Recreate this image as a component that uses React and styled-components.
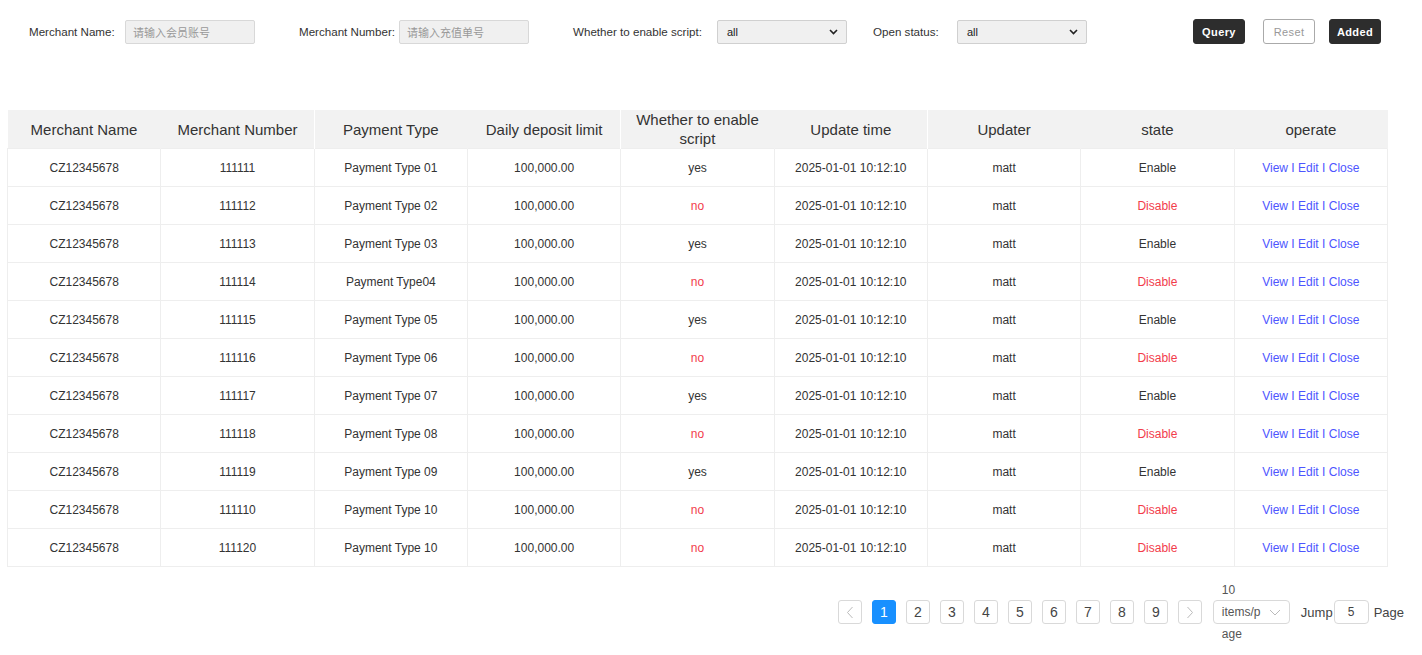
import React from "react";
import styled, { createGlobalStyle } from "styled-components";

const Global = createGlobalStyle`
  * { box-sizing: border-box; }
  html, body { height: 100%; }
  body {
    margin: 0;
    background: #fff;
    font-family: "Liberation Sans", Arial, "Noto Sans CJK SC", sans-serif;
    color: #333;
  }
`;

const Page = styled.div`
  width: 1422px;
  min-height: 655px;
  padding: 19px 0 40px 7px;
`;

const FilterBar = styled.div`
  display: flex;
  align-items: center;
  height: 25px;
  padding-left: 22px;
  margin-bottom: 66px;
`;

const FieldGroup = styled.div`
  display: flex;
  align-items: center;
  margin-right: ${(p) => p.$gap}px;
`;

const Label = styled.span`
  width: ${(p) => p.$w}px;
  font-size: 11.6px;
  color: #333;
  white-space: nowrap;
`;

const TextInput = styled.div`
  width: 130px;
  height: 24px;
  background: #f0f0f0;
  border: 1px solid #d8d8d8;
  border-radius: 2px;
  padding: 0 7px;
  display: flex;
  align-items: center;
  font-size: 11px;
  color: #999;
  font-family: "Noto Sans CJK SC", sans-serif;
`;

const SelectBox = styled.div`
  width: 130px;
  height: 24px;
  background: #f0f0f0;
  border: 1px solid #d0d0d0;
  border-radius: 2px;
  padding: 0 8px 0 9px;
  display: flex;
  align-items: center;
  justify-content: space-between;
  font-size: 11px;
  color: #222;
`;

const Buttons = styled.div`
  display: flex;
  align-items: center;
  margin-left: 106px;
`;

const Btn = styled.button`
  width: 52px;
  height: 25px;
  margin-right: ${(p) => p.$mr || 0}px;
  border-radius: 3px;
  font-family: "Liberation Sans", Arial, sans-serif;
  font-size: 11px;
  font-weight: ${(p) => (p.$ghost ? 400 : 700)};
  letter-spacing: 0.4px;
  cursor: pointer;
  background: ${(p) => (p.$ghost ? "#fff" : "#2d2d2d")};
  color: ${(p) => (p.$ghost ? "#999" : "#fff")};
  border: 1px solid ${(p) => (p.$ghost ? "#aaa" : "#2d2d2d")};
  padding: 0;
`;

const Table = styled.table`
  width: 1381px;
  table-layout: fixed;
  border-collapse: collapse;
`;

const Th = styled.th`
  height: 38px;
  padding: 0 8px;
  background: #f2f2f2;
  font-size: 15px;
  line-height: 19px;
  font-weight: 400;
  color: #333;
  text-align: center;
  border-right: 1px solid ${(p) => (p.$sep ? "#fff" : "#f2f2f2")};
`;

const Td = styled.td`
  height: 38px;
  padding: 0 6px;
  font-size: 12px;
  text-align: center;
  border: 1px solid #eeeeee;
  color: ${(p) => (p.$tone === "red" ? "#f23c4b" : p.$tone === "blue" ? "#4d55ff" : "#333")};
`;

const Pager = styled.div`
  display: flex;
  align-items: center;
  justify-content: flex-end;
  padding-right: 18px;
  margin-top: 33px;
  height: 24px;
`;

const PageBtn = styled.div`
  width: 24px;
  height: 24px;
  margin-right: ${(p) => p.$mr ?? 10}px;
  border: 1px solid ${(p) => (p.$active ? "#1890ff" : "#d9d9d9")};
  background: ${(p) => (p.$active ? "#1890ff" : "#fff")};
  color: ${(p) => (p.$active ? "#fff" : "#444")};
  border-radius: 3px;
  display: flex;
  align-items: center;
  justify-content: center;
  font-size: 14px;
`;

const SizeSelect = styled.div`
  width: 77px;
  height: 24px;
  border: 1px solid #d9d9d9;
  border-radius: 4px;
  margin-right: 11px;
  padding: 0 8px;
  display: flex;
  align-items: center;
  justify-content: space-between;
`;

const SizeText = styled.span`
  width: 42px;
  font-size: 12px;
  line-height: 22px;
  color: #555;
  overflow-wrap: anywhere;
`;

const PagerText = styled.span`
  font-size: 13px;
  color: #444;
`;

const JumpInput = styled.div`
  width: 35px;
  height: 24px;
  border: 1px solid #d9d9d9;
  border-radius: 4px;
  margin: 0 5px 0 1px;
  display: flex;
  align-items: center;
  justify-content: center;
  font-size: 12px;
  color: #444;
`;

const Chevron = () => (
  <svg width="9" height="6" viewBox="0 0 9 6">
    <path d="M1 1l3.5 3.5L8 1" fill="none" stroke="#222" strokeWidth="1.6" />
  </svg>
);

const Arrow = ({ dir }) => (
  <svg width="8" height="13" viewBox="0 0 8 13">
    <path
      d={dir === "left" ? "M6.5 1L1.5 6.5l5 5.5" : "M1.5 1l5 5.5-5 5.5"}
      fill="none"
      stroke="#bbb"
      strokeWidth="1"
    />
  </svg>
);

const DownThin = () => (
  <svg width="12" height="7" viewBox="0 0 12 7">
    <path d="M1 1l5 5 5-5" fill="none" stroke="#bbb" strokeWidth="1" />
  </svg>
);

const numbers = ["111111", "111112", "111113", "111114", "111115", "111116", "111117", "111118", "111119", "111110", "111120"];
const types = [
  "Payment Type 01",
  "Payment Type 02",
  "Payment Type 03",
  "Payment Type04",
  "Payment Type 05",
  "Payment Type 06",
  "Payment Type 07",
  "Payment Type 08",
  "Payment Type 09",
  "Payment Type 10",
  "Payment Type 10",
];
const enabled = [true, false, true, false, true, false, true, false, true, false, false];

const rows = numbers.map((n, i) => ({
  name: "CZ12345678",
  number: n,
  type: types[i],
  limit: "100,000.00",
  on: enabled[i],
  time: "2025-01-01 10:12:10",
  updater: "matt",
}));

const headers = [
  "Merchant Name",
  "Merchant Number",
  "Payment Type",
  "Daily deposit limit",
  "Whether to enable script",
  "Update time",
  "Updater",
  "state",
  "operate",
];

export default function App() {
  return (
    <Page>
      <Global />
      <FilterBar>
        <FieldGroup $gap={44}>
          <Label $w={96}>Merchant Name:</Label>
          <TextInput>请输入会员账号</TextInput>
        </FieldGroup>
        <FieldGroup $gap={44}>
          <Label $w={100}>Merchant Number:</Label>
          <TextInput>请输入充值单号</TextInput>
        </FieldGroup>
        <FieldGroup $gap={26}>
          <Label $w={144}>Whether to enable script:</Label>
          <SelectBox>
            <span>all</span>
            <Chevron />
          </SelectBox>
        </FieldGroup>
        <FieldGroup $gap={0}>
          <Label $w={84}>Open status:</Label>
          <SelectBox>
            <span>all</span>
            <Chevron />
          </SelectBox>
        </FieldGroup>
        <Buttons>
          <Btn $mr={18}>Query</Btn>
          <Btn $ghost $mr={14}>Reset</Btn>
          <Btn>Added</Btn>
        </Buttons>
      </FilterBar>

      <Table>
        <thead>
          <tr>
            {headers.map((h, i) => (
              <Th key={h} $sep={i === 1 || i === 3 || i === 5}>
                {h}
              </Th>
            ))}
          </tr>
        </thead>
        <tbody>
          {rows.map((r, i) => (
            <tr key={i}>
              <Td>{r.name}</Td>
              <Td>{r.number}</Td>
              <Td>{r.type}</Td>
              <Td>{r.limit}</Td>
              <Td $tone={r.on ? undefined : "red"}>{r.on ? "yes" : "no"}</Td>
              <Td>{r.time}</Td>
              <Td>{r.updater}</Td>
              <Td $tone={r.on ? undefined : "red"}>{r.on ? "Enable" : "Disable"}</Td>
              <Td $tone="blue">View I Edit I Close</Td>
            </tr>
          ))}
        </tbody>
      </Table>

      <Pager>
        <PageBtn $mr={10}>
          <Arrow dir="left" />
        </PageBtn>
        {[1, 2, 3, 4, 5, 6, 7, 8, 9].map((n) => (
          <PageBtn key={n} $active={n === 1}>
            {n}
          </PageBtn>
        ))}
        <PageBtn $mr={11}>
          <Arrow dir="right" />
        </PageBtn>
        <SizeSelect>
          <SizeText>10 items/page</SizeText>
          <DownThin />
        </SizeSelect>
        <PagerText>Jump</PagerText>
        <JumpInput>5</JumpInput>
        <PagerText>Page</PagerText>
      </Pager>
    </Page>
  );
}
